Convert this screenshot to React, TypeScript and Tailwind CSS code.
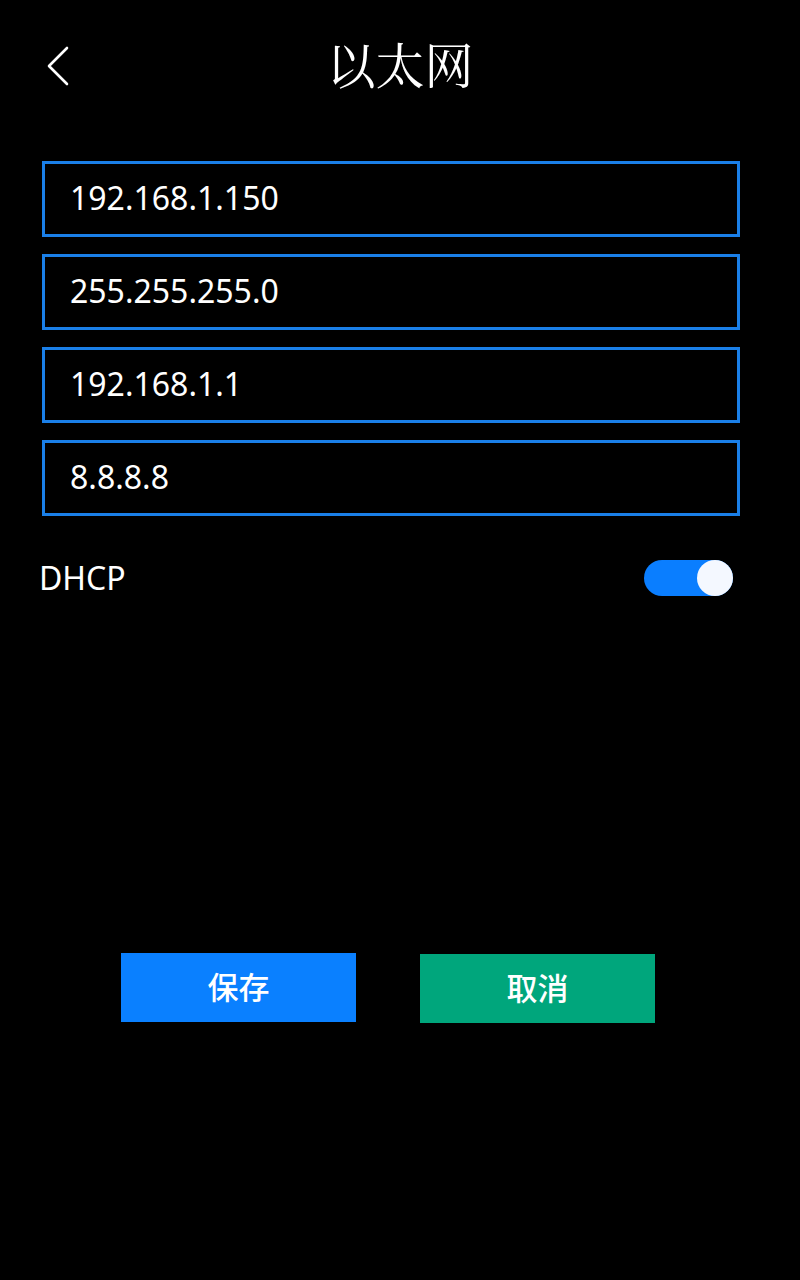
import React, { useState } from 'react';

const fields = ['192.168.1.150', '255.255.255.0', '192.168.1.1', '8.8.8.8'];

const App: React.FC = () => {
  const [dhcp, setDhcp] = useState(true);

  return (
    <div
      className="w-[800px] h-[1280px] bg-black text-white flex flex-col"
      style={{ fontFamily: '"Noto Sans", "Noto Sans CJK SC", sans-serif' }}
    >
      {/* header */}
      <div className="relative h-[130px] flex items-center justify-center">
        <button className="absolute left-[44px] top-[44px] w-[28px] h-[44px] flex items-center justify-center">
          <svg width="26" height="40" viewBox="0 0 26 40" fill="none">
            <path d="M22 2 L4 20 L22 38" stroke="white" strokeWidth="2.6" strokeLinecap="round" strokeLinejoin="round" />
          </svg>
        </button>
        <h1
          className="text-[49px] leading-none -mt-[3px] font-normal"
          style={{ fontFamily: '"Noto Serif CJK SC", "Noto Sans CJK SC", serif' }}
        >
          以太网
        </h1>
      </div>

      {/* fields */}
      <div className="flex flex-col gap-[17px] px-[42px] mt-[31px]">
        {fields.map((v) => (
          <div
            key={v}
            className="h-[76px] w-[698px] border-[3px] border-[#1a7fe8] flex items-center pl-[25px] pb-[2px] text-[32px]"
          >
            {v}
          </div>
        ))}
      </div>

      {/* dhcp */}
      <div className="flex items-center justify-between pl-[39px] pr-[67px] mt-[44px] h-[36px]">
        <span className="text-[32px] pb-[1px]">DHCP</span>
        <button
          onClick={() => setDhcp(!dhcp)}
          className={`w-[89px] h-[36px] rounded-full flex items-center ${dhcp ? 'bg-[#0a7eff] justify-end' : 'bg-[#555] justify-start'}`}
        >
          <span className="w-[36px] h-[36px] rounded-full bg-[#f4f8ff]" />
        </button>
      </div>

      {/* buttons */}
      <div className="flex items-start gap-[64px] pl-[121px] mt-[357px]">
        <button className="w-[235px] h-[69px] bg-[#0a80ff] text-[31px] font-medium text-white">保存</button>
        <button className="w-[235px] h-[69px] mt-[1px] bg-[#00a67c] text-[31px] font-medium text-white">取消</button>
      </div>
    </div>
  );
};

export default App;
